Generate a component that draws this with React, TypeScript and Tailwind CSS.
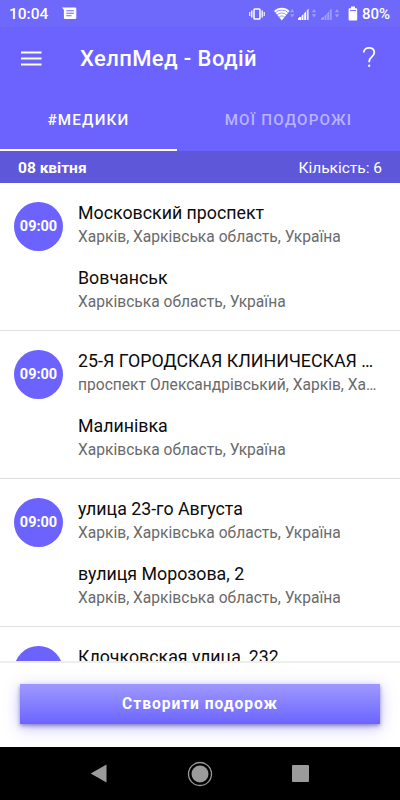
const trips = [
  {
    time: '09:00',
    from: 'Московский проспект',
    fromRegion: 'Харків, Харківська область, Україна',
    to: 'Вовчанськ',
    toRegion: 'Харківська область, Україна',
  },
  {
    time: '09:00',
    from: '25-Я ГОРОДСКАЯ КЛИНИЧЕСКАЯ …',
    fromRegion: 'проспект Олександрівський, Харків, Ха…',
    to: 'Малинівка',
    toRegion: 'Харківська область, Україна',
  },
  {
    time: '09:00',
    from: 'улица 23-го Августа',
    fromRegion: 'Харків, Харківська область, Україна',
    to: 'вулиця Морозова, 2',
    toRegion: 'Харків, Харківська область, Україна',
  },
];

const SignalIcon = ({ dim = false }: { dim?: boolean }) => (
  <svg width="20" height="14" viewBox="0 0 20 14" fill="#fff">
    <g opacity={dim ? 0.35 : 1}>
      <path d="M0 13v-1.5L1.5 10H3v3zM3.5 13V9L5.5 7v6z" />
      <path d="M6.2 13V6.3L8 4.5V13z" />
    </g>
    <path d="M8.7 13V3.6L10.7 1.5V13z" opacity={dim ? 0.35 : 0.8} />
    <path d="M13.8 5.3L16 2l2.2 3.3zM13.8 7.2l2.2 3.3 2.2-3.3z" opacity="0.35" />
  </svg>
);

const StatusBar = () => (
  <div className="flex h-[27px] shrink-0 items-center bg-[#6e68fb] pl-[9px] pr-[9px] text-white">
    <span className="w-[40px] pt-[2px] text-[15.5px] font-medium leading-none">10:04</span>
    <svg className="ml-[13px]" width="15" height="13" viewBox="0 0 15 13">
      <path d="M0 .5h13a1.3 1.3 0 0 1 1.3 1.3v9a1.3 1.3 0 0 1-1.3 1.3H3.2a1.3 1.3 0 0 1-1.3-1.3V3z" fill="#fff" />
      <path d="M4.3 3.7h7.6M4.3 6.2h7.6M4.3 8.7h5.2" stroke="#6e68fb" strokeWidth="1.1" />
    </svg>
    <div className="ml-auto flex items-center">
      <svg width="16" height="14" viewBox="0 0 16 14" fill="none" stroke="#fff">
        <rect x="5" y="2" width="6" height="10" rx="0.8" strokeWidth="1.5" />
        <path d="M2.8 3.5v7M13.2 3.5v7" strokeWidth="1.3" />
        <path d="M.8 5v4M15.2 5v4" strokeWidth="1.1" />
      </svg>
      <svg className="ml-[9px]" width="21" height="14" viewBox="0 0 21 14">
        <path d="M0 3.9a11.3 11.3 0 0 1 15.6 0L7.8 13.4z" fill="#fff" />
        <path d="M1 6a9.4 9.4 0 0 1 13.6 0M2.8 8.2a6.8 6.8 0 0 1 10 0M4.8 10.3a4 4 0 0 1 6 0" fill="none" stroke="#6e68fb" strokeWidth="0.7" />
        <path d="M16 5.3L18.2 2l2.2 3.3zM16 7.2l2.2 3.3 2.2-3.3z" fill="#fff" opacity="0.35" />
      </svg>
      <span className="ml-[3px] flex"><SignalIcon /></span>
      <span className="ml-[3px] flex"><SignalIcon dim /></span>
      <svg className="ml-[7px]" width="10" height="15" viewBox="0 0 10 15">
        <path d="M3 .5h4v1.7h1.2a1 1 0 0 1 1 1V13.5a1 1 0 0 1-1 1H1.6a1 1 0 0 1-1-1V3.2a1 1 0 0 1 1-1H3z" fill="#fff" />
        <path d="M2 4.6h6" stroke="#6e68fb" strokeWidth="1" />
      </svg>
      <span className="ml-[4px] w-[29px] whitespace-nowrap pt-[2px] text-[15px] font-medium leading-none">80%</span>
    </div>
  </div>
);

const Header = () => (
  <header className="flex h-[63px] shrink-0 items-center pl-[21px] pr-[24px] text-white">
    <svg width="21" height="15" viewBox="0 0 21 15" stroke="#fff" strokeWidth="1.9">
      <path d="M0 1.5h20.5M0 7.5h20.5M0 13.5h20.5" />
    </svg>
    <h1 className="ml-[38px] text-[22px] font-medium leading-none tracking-[0.4px]">ХелпМед - Водій</h1>
    <svg className="mb-[3px] ml-auto" width="14" height="22" viewBox="0 0 14 22" fill="none" stroke="#fff" strokeWidth="1.8">
      <path d="M1.8 6.6C1.8 3.6 4 1.9 7 1.9s5.3 1.7 5.3 4.7c0 4-5.1 4.6-5.1 8.7v.9" />
      <path d="M7.2 18.7v2.2" strokeWidth="2" />
    </svg>
  </header>
);

const Place = ({ title, region }: { title: string; region: string }) => (
  <div className="whitespace-nowrap">
    <p className="h-6 text-[17.8px] leading-6 text-[#0c0c0c]">{title}</p>
    <p className="h-[23px] text-[15.6px] leading-6 text-[#6a6a6a]">{region}</p>
  </div>
);

const TimeBadge = ({ time }: { time: string }) => (
  <div className="mt-px flex size-[49px] shrink-0 items-center justify-center rounded-full bg-[#6c63ff] text-[14.5px] font-bold text-white">
    {time}
  </div>
);

export default function App() {
  return (
    <div className="flex h-[800px] w-[400px] flex-col overflow-hidden bg-[#6c63ff] font-[Roboto,'Noto_Sans',sans-serif]">
      <StatusBar />
      <Header />

      <nav className="flex h-[61px] shrink-0 text-[15.2px] font-medium tracking-[1.2px]">
        <div className="flex w-[177px] items-center justify-center border-b-[2.5px] border-white pt-[2px] text-white">
          #МЕДИКИ
        </div>
        <div className="flex flex-1 items-center justify-center text-[#b9b4ff]">МОЇ ПОДОРОЖІ</div>
      </nav>

      <div className="flex h-8 shrink-0 items-center justify-between bg-[#5f57da] pl-[18px] pr-[18px] pt-[3px] text-[15.5px] text-white">
        <span className="font-bold">08 квітня</span>
        <span>Кількість: 6</span>
      </div>

      <main className="min-h-0 flex-1 overflow-hidden bg-white">
        {trips.map((trip, i) => (
          <article key={i} className="flex h-[148px] border-b border-[#dedede] pl-[14px] pt-[18px]">
            <TimeBadge time={trip.time} />
            <div className="ml-[15px] flex flex-col gap-[18px]">
              <Place title={trip.from} region={trip.fromRegion} />
              <Place title={trip.to} region={trip.toRegion} />
            </div>
          </article>
        ))}
        <article className="flex pl-[14px] pt-[18px]">
          <TimeBadge time="" />
          <p className="ml-[15px] text-[17.8px] leading-6 text-[#0c0c0c]">Клочковская улица, 232</p>
        </article>
      </main>

      <footer className="h-[86px] shrink-0 overflow-hidden border-t-2 border-[#eeeeee] bg-white px-5 pt-[21px]">
        <button className="flex h-10 w-full items-center justify-center bg-linear-to-b from-[#a098ff] to-[#6c63ff] pt-px text-[15.6px] font-bold tracking-[0.95px] text-white shadow-[0_2px_4px_rgba(60,50,140,0.5),0_4px_16px_rgba(108,99,255,0.4)]">
          Створити подорож
        </button>
      </footer>

      <div className="flex h-[53px] shrink-0 items-center justify-between bg-black pl-[90px] pr-[91px]">
        <svg width="17" height="19" viewBox="0 0 17 19">
          <path d="M16.5.5v18L.7 9.5z" fill="#9b9b9b" />
        </svg>
        <svg width="26" height="26" viewBox="0 0 26 26">
          <circle cx="13" cy="13" r="11.5" fill="none" stroke="#9b9b9b" strokeWidth="1.3" />
          <circle cx="13" cy="13" r="8.5" fill="#9b9b9b" />
        </svg>
        <svg width="17" height="17" viewBox="0 0 17 17">
          <rect width="17" height="17" rx="1" fill="#9b9b9b" />
        </svg>
      </div>
    </div>
  );
}
